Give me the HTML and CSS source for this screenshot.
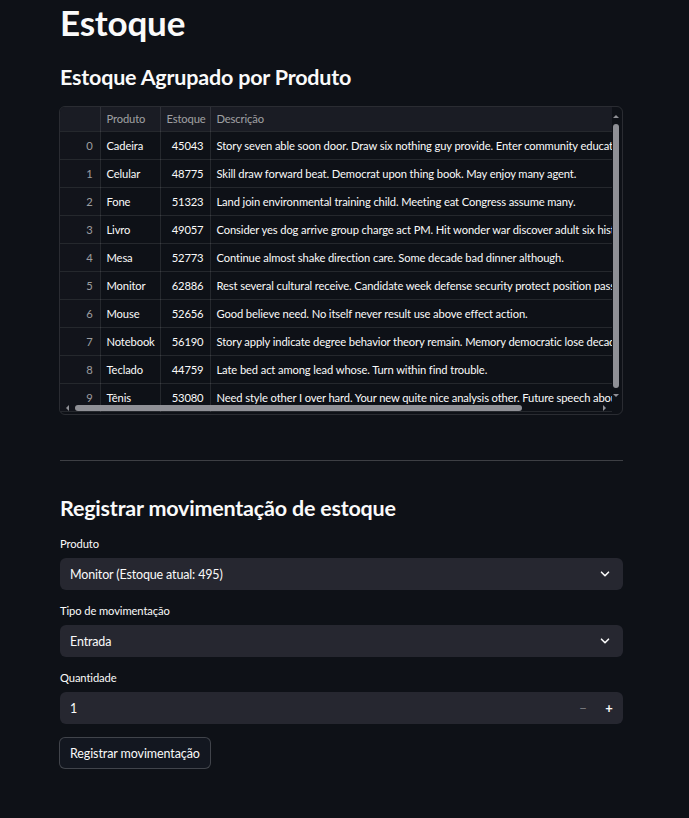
FILE: index.html
```html
<!DOCTYPE html>
<html lang="pt">
<head>
<meta charset="utf-8">
<title>Estoque</title>
<link rel="stylesheet" href="styles.css">
</head>
<body>
<main class="main">
  <h1 class="title">Estoque</h1>
  <h3 class="subheader">Estoque Agrupado por Produto</h3>

  <div class="grid-wrap">
    <div class="grid-clip">
      <table class="grid">
        <colgroup>
          <col class="c-idx"><col class="c-prod"><col class="c-est"><col class="c-desc">
        </colgroup>
        <thead>
          <tr><th></th><th>Produto</th><th>Estoque</th><th>Descrição</th></tr>
        </thead>
        <tbody>
          <tr><td class="idx">0</td><td>Cadeira</td><td class="num">45043</td><td>Story seven able soon door. Draw six nothing guy provide. Enter community education this.</td></tr>
          <tr><td class="idx">1</td><td>Celular</td><td class="num">48775</td><td>Skill draw forward beat. Democrat upon thing book. May enjoy many agent.</td></tr>
          <tr><td class="idx">2</td><td>Fone</td><td class="num">51323</td><td>Land join environmental training child. Meeting eat Congress assume many.</td></tr>
          <tr><td class="idx">3</td><td>Livro</td><td class="num">49057</td><td>Consider yes dog arrive group charge act PM. Hit wonder war discover adult six history.</td></tr>
          <tr><td class="idx">4</td><td>Mesa</td><td class="num">52773</td><td>Continue almost shake direction care. Some decade bad dinner although.</td></tr>
          <tr><td class="idx">5</td><td>Monitor</td><td class="num">62886</td><td>Rest several cultural receive. Candidate week defense security protect position pass.</td></tr>
          <tr><td class="idx">6</td><td>Mouse</td><td class="num">52656</td><td>Good believe need. No itself never result use above effect action.</td></tr>
          <tr><td class="idx">7</td><td>Notebook</td><td class="num">56190</td><td>Story apply indicate degree behavior theory remain. Memory democratic lose decade.</td></tr>
          <tr><td class="idx">8</td><td>Teclado</td><td class="num">44759</td><td>Late bed act among lead whose. Turn within find trouble.</td></tr>
          <tr><td class="idx">9</td><td>Tênis</td><td class="num">53080</td><td>Need style other I over hard. Your new quite nice analysis other. Future speech about it.</td></tr>
        </tbody>
      </table>
    </div>
    <div class="vscroll">
      <span class="arr arr-up"></span>
      <span class="vthumb"></span>
      <span class="arr arr-down"></span>
    </div>
    <div class="hscroll">
      <span class="arr arr-left"></span>
      <span class="hthumb"></span>
      <span class="arr arr-right"></span>
    </div>
  </div>

  <hr class="divider">

  <h3 class="subheader sub2">Registrar movimentação de estoque</h3>

  <div class="field">
    <label class="label">Produto</label>
    <div class="select">
      <span>Monitor (Estoque atual: 495)</span>
      <svg class="chev" width="12" height="12" viewBox="0 0 12 12"><path d="M2.5 4.2 L6 7.7 L9.5 4.2" fill="none" stroke="#fafafa" stroke-width="1.6" stroke-linecap="round" stroke-linejoin="round"/></svg>
    </div>
  </div>

  <div class="field">
    <label class="label">Tipo de movimentação</label>
    <div class="select">
      <span>Entrada</span>
      <svg class="chev" width="12" height="12" viewBox="0 0 12 12"><path d="M2.5 4.2 L6 7.7 L9.5 4.2" fill="none" stroke="#fafafa" stroke-width="1.6" stroke-linecap="round" stroke-linejoin="round"/></svg>
    </div>
  </div>

  <div class="field">
    <label class="label">Quantidade</label>
    <div class="number">
      <span class="num-val">1</span>
      <span class="step step-minus">−</span>
      <span class="step step-plus">+</span>
    </div>
  </div>

  <button class="btn">Registrar movimentação</button>
</main>
</body>
</html>
```

FILE: styles.css
```css
* { box-sizing: border-box; }

body {
  margin: 0;
  background: #0e1117;
  color: #fafafa;
  font-family: "Source Sans Pro", Lato, "Noto Sans", sans-serif;
}

.main {
  width: 563px;
  margin-left: 60px;
  padding-bottom: 49px;
}

.title {
  margin: 0;
  padding-top: 1px;
  font-size: 35px;
  line-height: 42px;
  font-weight: 700;
  letter-spacing: -0.2px;
}

.subheader {
  margin: 0;
  padding-top: 19px;
  font-size: 21.5px;
  line-height: 30px;
  font-weight: 700;
  letter-spacing: -0.2px;
}

.grid-wrap {
  position: relative;
  margin-top: 14px;
  width: 564px;
  margin-left: -1px;
  border: 1px solid rgba(250, 250, 250, 0.12);
  border-radius: 6px;
  overflow: hidden;
  height: 309px;
}

.grid-clip {
  width: 552px;
  overflow: hidden;
}

.grid {
  border-collapse: collapse;
  table-layout: fixed;
  width: 940px;
  font-size: 11.2px;
  letter-spacing: -0.12px;
}

.c-idx { width: 40px; }
.c-prod { width: 60px; }
.c-est { width: 50px; }
.c-desc { width: 790px; }

.grid th {
  height: 24px;
  background: #1a1c24;
  color: rgba(250, 250, 250, 0.6);
  font-weight: 400;
  text-align: left;
  padding: 0 6px;
  border-right: 1px solid rgba(250, 250, 250, 0.1);
  border-bottom: 1px solid rgba(250, 250, 250, 0.1);
  white-space: nowrap;
}

.grid td {
  height: 28px;
  padding: 0 6px;
  white-space: nowrap;
  overflow: hidden;
  border-right: 1px solid rgba(250, 250, 250, 0.1);
  border-bottom: 1px solid rgba(250, 250, 250, 0.1);
}

.grid td.idx {
  text-align: right;
  color: rgba(250, 250, 250, 0.6);
  background: #12141b;
  padding-right: 7px;
}

.grid td.num {
  text-align: right;
}

.vscroll {
  position: absolute;
  right: 0;
  top: 0;
  width: 11px;
  height: 296px;
}

.vthumb {
  position: absolute;
  left: 2px;
  top: 17px;
  width: 6px;
  height: 264px;
  border-radius: 3px;
  background: #8f9096;
}

.hscroll {
  position: absolute;
  left: 0;
  bottom: 0;
  width: 552px;
  height: 11px;
}

.hthumb {
  position: absolute;
  left: 15px;
  top: 2px;
  height: 6px;
  width: 447px;
  border-radius: 3px;
  background: #8f9096;
}

.arr {
  position: absolute;
  width: 0;
  height: 0;
  border: 3px solid transparent;
}

.arr-up { left: 2px; top: 5px; border-bottom: 3px solid #8f9096; }
.arr-down { left: 2px; bottom: 3px; border-top: 3px solid #8f9096; }
.arr-left { left: 3px; top: 2px; border-right: 3px solid #8f9096; }
.arr-right { right: 3px; top: 2px; border-left: 3px solid #8f9096; }

.divider {
  margin: 45px 0 0;
  border: none;
  border-top: 1px solid rgba(250, 250, 250, 0.2);
  height: 0;
}

.sub2 {
  padding-top: 32px;
}

.field {
  margin-top: 13px;
}

.field + .field {
  margin-top: 13px;
}

.label {
  display: block;
  font-size: 11.2px;
  line-height: 16px;
  height: 16px;
  margin-bottom: 6px;
  letter-spacing: -0.1px;
}

.select,
.number {
  height: 32px;
  background: #262730;
  border-radius: 6px;
  display: flex;
  align-items: center;
  padding: 0 10px;
  font-size: 12.5px;
  letter-spacing: -0.15px;
}

.select span {
  flex: 1;
}

.chev {
  margin-right: 2px;
}

.number {
  padding-right: 1px;
}

.num-val {
  flex: 1;
}

.step {
  width: 26px;
  text-align: center;
  font-size: 13px;
  font-weight: 700;
}

.step-minus {
  color: rgba(250, 250, 250, 0.4);
  font-weight: 400;
}

.btn {
  margin-top: 13px;
  height: 32px;
  padding: 0 10px;
  background: #131720;
  color: #fafafa;
  border: 1px solid rgba(250, 250, 250, 0.2);
  border-radius: 6px;
  font-family: inherit;
  font-size: 12.5px;
  letter-spacing: -0.1px;
  margin-left: -1px;
}
```
